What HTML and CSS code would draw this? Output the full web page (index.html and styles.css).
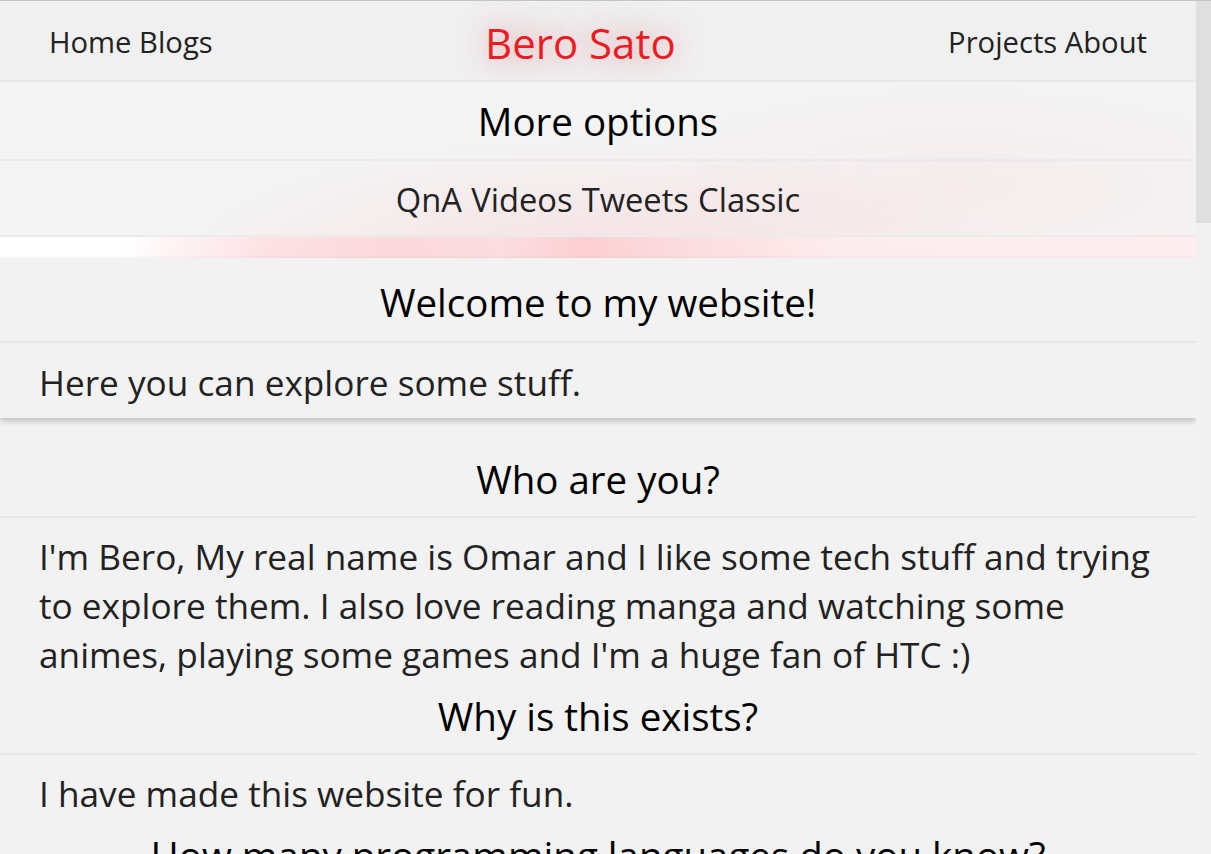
FILE: index.html
```html
<!DOCTYPE html>
<html lang="en">
<head>
<meta charset="utf-8">
<title>Bero Sato</title>
<link rel="stylesheet" href="styles.css">
</head>
<body>
<div class="page">
  <header class="topbar">
    <nav class="links"><a href="#">Home</a> <a href="#">Blogs</a></nav>
    <h1 class="brand">Bero Sato</h1>
    <nav class="links"><a href="#">Projects</a> <a href="#">About</a></nav>
  </header>
  <div class="dropdown">
    <div class="dd-title">More options</div>
    <div class="dd-links"><a href="#">QnA</a> <a href="#">Videos</a> <a href="#">Tweets</a> <a href="#">Classic</a></div>
    <div class="dd-glow"></div>
  </div>
  <section class="card">
    <h2 class="card-title">Welcome to my website!</h2>
    <p class="card-text">Here you can explore some stuff.</p>
  </section>
  <section class="faq">
    <h2 class="q">Who are you?</h2>
    <p class="a">I'm Bero, My real name is Omar and I like some tech stuff and trying to explore them. I also love reading manga and watching some animes, playing some games and I'm a huge fan of HTC :)</p>
    <h2 class="q">Why is this exists?</h2>
    <p class="a">I have made this website for fun.</p>
    <h2 class="q q-last">How many programming languages do you know?</h2>
  </section>
</div>
<div class="rail"><div class="thumb"></div></div>
</body>
</html>
```

FILE: styles.css
```css
html {
  background: #f2f2f2;
}
body {
  margin: 0;
  border-top: 1px solid #c4c4c4;
  font-family: "Open Sans", "Noto Sans", sans-serif;
  color: #222;
  display: flex;
  align-items: flex-start;
}
a {
  color: inherit;
  text-decoration: none;
}
.page {
  flex: 1;
  min-width: 0;
  display: flex;
  flex-direction: column;
}
.rail {
  width: 15px;
  flex: none;
  align-self: stretch;
  background: #f1f1f1;
}
.thumb {
  height: 222px;
  background: #dfdfdf;
}
.topbar {
  box-sizing: border-box;
  height: 81px;
  padding: 3px 49px 0;
  background: #f0f0f0;
  border-bottom: 2px solid #e8e8e8;
  display: flex;
  align-items: center;
  justify-content: space-between;
}
.links {
  font-size: 29.2px;
  color: #222;
}
.brand {
  margin: 0;
  font-weight: 400;
  font-size: 42px;
  color: #ed1c24;
  text-shadow: 0 0 30px rgba(220, 50, 70, 0.5);
}
.dropdown {
  display: flex;
  flex-direction: column;
  background:
    radial-gradient(ellipse 35% 70% at 50% 100%, rgba(250, 195, 200, 0.38), rgba(250, 195, 200, 0) 100%),
    radial-gradient(ellipse 30% 60% at 80% 60%, rgba(250, 212, 216, 0.28), rgba(250, 212, 216, 0) 100%),
    #f4f4f4;
}
.dd-title {
  height: 77px;
  display: flex;
  align-items: center;
  justify-content: center;
  font-size: 38.5px;
  color: #000;
  border-bottom: 2px solid #ebebeb;
}
.dd-links {
  box-sizing: border-box;
  height: 76px;
  padding-top: 3px;
  display: flex;
  align-items: center;
  justify-content: center;
  gap: 0.28em;
  font-size: 32.7px;
  color: #222;
  border-bottom: 2px solid #ebebeb;
}
.dd-glow {
  height: 21px;
  background: linear-gradient(90deg, #ffffff 0%, #ffffff 10%, #fde2e5 22%, #fcd8dc 33%, #fcdde0 42%, #fccfd3 49%, #fcdcdf 57%, #fdeced 70%, #fdeff0 100%);
}
.card {
  background: #f2f2f2;
  box-shadow: 0 3px 6px rgba(0, 0, 0, 0.22);
  display: flex;
  flex-direction: column;
}
.card-title {
  box-sizing: border-box;
  margin: 0;
  height: 85px;
  padding-top: 4px;
  display: flex;
  align-items: center;
  justify-content: center;
  font-weight: 400;
  font-size: 38.5px;
  color: #000;
  border-bottom: 2px solid #e8e8e8;
}
.card-text {
  box-sizing: border-box;
  margin: 0;
  height: 75px;
  padding-top: 3px;
  display: flex;
  align-items: center;
  padding-left: 39px;
  font-size: 35.2px;
  color: #222;
}
.faq {
  display: flex;
  flex-direction: column;
  padding-top: 36px;
}
.q {
  margin: 0;
  font-weight: 400;
  font-size: 38.5px;
  line-height: 50px;
  text-align: center;
  color: #000;
  padding-bottom: 12px;
  border-bottom: 2px solid #e8e8e8;
}
.a {
  margin: 0;
  padding: 14px 30px 11px 39px;
  font-size: 35.2px;
  line-height: 49px;
  color: #222;
}
.a + .q {
  padding-top: 1px;
}
.q-last {
  border-bottom: none;
}
```
